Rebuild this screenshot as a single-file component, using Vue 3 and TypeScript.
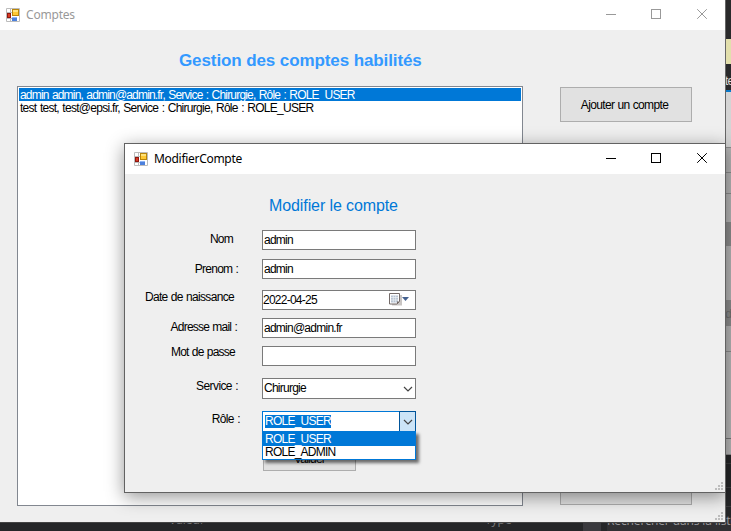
<script setup lang="ts">
import { ref } from 'vue'

interface Field {
  key: string
  label: string
  value: string
  kind: 'text' | 'date' | 'select' | 'open'
}

const accounts = ref<string[]>([
  'admin admin, admin@admin.fr, Service : Chirurgie, Rôle : ROLE_USER',
  'test test, test@epsi.fr, Service : Chirurgie, Rôle : ROLE_USER',
])
const selected = ref(0)
const roles = ['ROLE_USER', 'ROLE_ADMIN']

const fields: Field[] = [
  { key: 'nom', label: 'Nom', value: 'admin', kind: 'text' },
  { key: 'prenom', label: 'Prenom :', value: 'admin', kind: 'text' },
  { key: 'date', label: 'Date de naissance', value: '2022-04-25', kind: 'date' },
  { key: 'mail', label: 'Adresse mail :', value: 'admin@admin.fr', kind: 'text' },
  { key: 'pass', label: 'Mot de passe', value: '', kind: 'text' },
  { key: 'service', label: 'Service :', value: 'Chirurgie', kind: 'select' },
  { key: 'role', label: 'Rôle :', value: 'ROLE_USER', kind: 'open' },
]
const windows = [
  { id: 'main', title: 'Comptes' },
  { id: 'dialog', title: 'ModifierCompte' },
]
const grip = [[6, 0], [3, 3], [6, 3], [0, 6], [3, 6], [6, 6]]
</script>

<template>
  <div class="desktop">
    <div class="ide">
      <div class="ide-side">
        <i class="s-dark"></i><i class="s-yellow"></i>
        <b class="s-tab">te</b>
        <i class="s-light a"></i><i class="s-light b"></i><i class="s-light c"></i>
        <i class="s-mid"></i><i class="s-light d"></i><b class="s-mid e">de</b><i class="s-light f"></i>
        <i class="s-light g"></i><i class="s-low"></i>
      </div>
      <div class="ide-foot">
        <span class="valeur">Valeur</span><span class="type">Type</span><i class="block"></i><span class="search">Rechercher dans la liste</span>
      </div>
    </div>

    <section v-for="w in windows" :key="w.id" class="window" :class="w.id">
      <header class="titlebar">
        <svg class="app-icon" width="14" height="14" viewBox="0 0 14 14">
          <path d="M.5.5h13v13H.5zM.5 4.5h6M4.5.5v4M.5 10.5h6M4.5 10v3" fill="#fff" stroke="#bcbcbc" />
          <rect x="6.5" y="1.5" width="6" height="6" fill="#ffc934" stroke="#b8860c" />
          <path d="M7 2h5v2H7z" fill="#ffe37b" />
          <rect x="1.5" y="5.5" width="3" height="4" fill="#d93a22" stroke="#8e1710" />
          <rect x="6" y="9" width="5" height="4" fill="#4c80dc" />
          <path d="M6 9h5v1H6z" fill="#8fb5f5" />
        </svg>
        <span class="title">{{ w.title }}</span>
        <svg class="controls" width="103" height="12" viewBox="0 0 103 12" fill="none" stroke="currentColor">
          <path d="M0 6.5h10M45.500 1.500h9v9h-9z" shape-rendering="crispEdges" />
          <path d="M91.200 1.200l9.600 9.600M100.800 1.200l-9.600 9.600" />
        </svg>
      </header>

      <div v-if="w.id === 'main'" class="main-body">
        <h1>Gestion des comptes habilités</h1>
        <div class="columns">
          <ul class="list">
            <li v-for="(a, i) in accounts" :key="a" :class="{ active: i === selected }" @click="selected = i">{{ a }}</li>
          </ul>
          <div class="actions">
            <button class="btn big">Ajouter un compte</button>
            <button class="btn big"></button>
          </div>
        </div>
      </div>

      <div v-else class="dialog-body">
        <h2>Modifier le compte</h2>
        <div v-for="f in fields" :key="f.key" class="row" :class="f.key">
          <label><span>{{ f.label }}</span></label>
          <div class="field" :class="f.kind">
            <span class="value">{{ f.value }}</span>
            <svg v-if="f.kind === 'date'" width="22" height="14" viewBox="0 0 22 14">
              <path d="M2 2h11v10.500H3z" fill="#c9c5c3" />
              <path d="M.5.5h10v8l-2.500 2.500H.5z" fill="#fff" stroke="#746b69" />
              <path d="M2 2.500h7v7H2z" fill="#b8c3d2" />
              <path d="M2 4.500h7M2 7h7M4.300 2.500v7M6.700 2.500v7" stroke="#eef2f7" stroke-width=".7" />
              <path d="M8 11V8.500h2.500z" fill="#746b69" />
              <path d="M13 4h7l-3.500 4z" fill="#44618f" />
            </svg>
            <span v-if="f.kind === 'select' || f.kind === 'open'" class="arrow">
              <svg width="10" height="6" viewBox="0 0 10 6"><path d="M1 1l4 4 4-4" fill="none" stroke="#444" stroke-width="1.200" /></svg>
            </span>
            <ul v-if="f.kind === 'open'" class="menu">
              <li v-for="r in roles" :key="r" :class="{ active: r === f.value }">{{ r }}</li>
            </ul>
          </div>
        </div>
        <button class="btn submit">Valider</button>
      </div>
      <svg class="grip" width="8" height="8" viewBox="0 0 8 8">
        <rect v-for="(g, i) in grip" :key="i" :x="g[0]" :y="g[1]" width="2" height="2" fill="#bdbdbd" />
      </svg>
    </section>
  </div>
</template>

<style>
body { margin: 0; overflow: hidden; }
</style>

<style scoped>
* { box-sizing: border-box; }
.desktop {
  position: relative;
  width: 731px;
  height: 531px;
  overflow: hidden;
  background: #252628;
  font: 12px/13px "Liberation Sans", Arial, sans-serif;
  letter-spacing: -.75px;
  color: #000;
}
ul { list-style: none; margin: 0; padding: 0; }
h1, h2 { margin: 0; white-space: nowrap; }
.ide { display: flex; flex-direction: column; align-items: flex-end; height: 531px; }
.ide-side { display: flex; flex-direction: column; width: 6px; height: 522px; flex: none; overflow: hidden; }
.ide-side > * { flex: none; }
.s-dark { height: 39px; background: #2a2a2b; }
.s-yellow { height: 25px; background: #e2dfac; }
.s-tab { height: 28px; border-bottom: 2px solid #0878c8; background: #29292b; color: #ddd; line-height: 34px; font-weight: 400; }
.s-light { background: #b6b6b6; border-bottom: 1px solid #8d8d8d; }
.s-light.a { height: 56px; background: #d4d4d4; }
.s-light.b { height: 25px; }
.s-light.c { height: 50px; background: linear-gradient(#b6b6b6 20px, #8d8d8d 20px 21px, #b6b6b6 21px); }
.s-mid { height: 23px; background: #8d8d8d; color: #707070; font-size: 13px; line-height: 25px; font-weight: 400; }
.s-light.d { height: 55px; }
.s-mid.e { height: 25px; }
.s-light.f { height: 26px; }
.s-light.g { height: 103px; background: linear-gradient(#b9b9b9 86px, #777 86px 87px, #b9b9b9 87px); }
.s-low { height: 67px; background: linear-gradient(#252628 8px, #3b3b3d 8px 9px, #252628 9px 32px, #3b3b3d 32px 33px, #252628 33px 51px, #3b3b3d 51px 52px, #252628 52px); }
.ide-foot {
  display: flex;
  width: 731px;
  height: 14px;
  margin-top: -5px;
  flex: none;
  background: #252628;
  color: #77787a;
  font: 12px/14px "Open Sans", sans-serif;
  letter-spacing: 0;
  white-space: nowrap;
}
.ide-foot > * { flex: none; }
.valeur { width: 316px; margin-left: 169px; line-height: 5px; }
.type { width: 98px; line-height: 6px; }
.block { width: 18px; background: #3a3a3e; }
.search { width: 130px; margin-left: 6px; line-height: 8px; letter-spacing: -.1px; color: #9a9a9c; background: #303033; }

.window { position: absolute; display: flex; flex-direction: column; background: #efefef; }
.window.main { left: 0; top: 0; width: 726px; height: 523px; border-right: 1px solid #666; border-bottom: 1px solid #444; }
.window.dialog {
  left: 124px;
  top: 143px;
  width: 602px;
  height: 350px;
  border: 1px solid #626262;
  box-shadow: 0 4px 17px rgba(0, 0, 0, .42);
}
.titlebar { display: flex; align-items: center; flex: none; height: 30px; background: #fff; color: #999; }
.dialog .titlebar { color: #000; }
.app-icon { margin-left: 6px; }
.dialog .app-icon { margin-left: 9px; }
.title { flex: 1; margin-left: 6px; font: 12px/16px "Noto Sans", sans-serif; letter-spacing: -.2px; }
.dialog .title { letter-spacing: -.3px; }
.controls { margin-right: 16px; margin-bottom: 2px; }

.main-body { padding: 0 33px 0 17px; }
h1 { margin: 21px 0 0 162px; font-size: 17px; line-height: 20px; letter-spacing: -.1px; color: #3399ff; }
.columns { display: flex; justify-content: space-between; margin-top: 15px; }
.list { width: 506px; height: 420px; padding: 1px; background: #fff; border: 1px solid #828790; }
.list li { height: 13px; padding-left: 1px; line-height: 14px; letter-spacing: -.72px; word-spacing: .8px; white-space: nowrap; }
.active { background: #0078d7; color: #fff; }
.list .active { letter-spacing: -.82px; }
.actions { display: flex; flex-direction: column; justify-content: space-between; height: 418px; margin-top: 1px; }
.btn { padding: 0; border: 1px solid #adadad; background: #e1e1e1; color: #000; font: inherit; letter-spacing: inherit; }
.big { width: 132px; height: 35px; padding: 1px 3px 0 0; letter-spacing: -.65px; word-spacing: .5px; }

.dialog-body { display: flex; flex-direction: column; }
h2 { margin: 21px 0 0 144px; padding-top: 1px; font-size: 16px; line-height: 20px; height: 20px; font-weight: 400; letter-spacing: -.1px; color: #0078d7; }
.row { display: flex; align-items: center; height: 20px; flex: none; }
.row.nom { margin-top: 15px; }
.row.prenom { margin-top: 9px; }
.row.date { margin-top: 11px; }
.row.mail, .row.pass { margin-top: 8px; }
.row.service { margin-top: 12px; height: 21px; }
.row.role { margin-top: 12px; height: 21px; }
.row label { width: 137px; text-align: right; white-space: nowrap; letter-spacing: -.77px; word-spacing: .6px; }
.nom label { padding: 0 29px 2px 0; }
.prenom label { padding-right: 24px; }
.date label { padding: 0 28px 6px 0; letter-spacing: -.68px; }
.mail label { padding: 0 25px 2px 0; }
.pass label { padding: 0 27px 8px 0; }
.service label { padding: 0 24px 5px 0; letter-spacing: -.6px; }
.role label { padding: 0 22px 5px 0; letter-spacing: -.6px; }
.field {
  position: relative;
  display: flex;
  align-items: center;
  justify-content: space-between;
  width: 154px;
  height: 100%;
  padding-left: 1px;
  background: #fff;
  border: 1px solid #7a7a7a;
}
.date .field { padding: 0 4px 0 0; }
.arrow { display: flex; align-items: center; justify-content: center; width: 17px; height: 21px; margin-right: -1px; }
.field.open { padding-left: 2px; border-color: #0078d7; }
.open .value { background: #0078d7; color: #fff; }
.open .arrow { border: 1px solid #005499; background: #cce4f7; }
.menu {
  position: absolute;
  z-index: 1;
  top: 19px;
  left: -1px;
  width: 154px;
  border: 1px solid #0078d7;
  background: #fff;
  box-shadow: 3px 3px 3px rgba(0, 0, 0, .55);
}
.menu li { height: 13px; padding-left: 2px; line-height: 13px; }
.menu li:first-child { height: 14px; padding-top: 1px; }
.submit { width: 93px; height: 23px; margin: 16px 0 0 138px; }
.grip { position: absolute; right: 2px; bottom: 2px; }
</style>
